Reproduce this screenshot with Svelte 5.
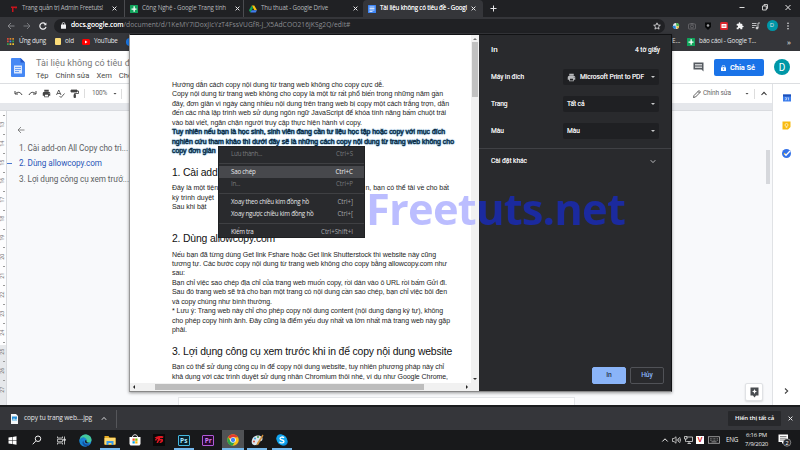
<script>
  // Spreads the letters of a line so that it fills the given width.
  function fit(node, width) {
    node.style.letterSpacing = '0px';
    const range = document.createRange();
    range.selectNodeContents(node);
    const natural = range.getBoundingClientRect().width;
    const count = [...node.textContent.normalize('NFC')].length;
    node.style.letterSpacing = `${(width - natural) / count}px`;
    node.style.width = `${width}px`;
  }

  const tabs = [
    { icon: 'red', text: 'Trang quản trị Admin Freetuts!', w: 81 },
    { icon: 'sheet', text: 'Công Nghệ - Google Trang tính', w: 84 },
    { icon: 'drive', text: 'Thu thuat - Google Drive', w: 67 },
    { icon: 'doc', text: 'Tài liệu không có tiêu đề - Googl', w: 87, active: true }
  ];

  const intro = [
    ['Hướng dẫn cách copy nội dung từ trang web không cho copy cực dễ.', 212],
    ['Copy nội dung từ trang web không cho copy là một từ rất phổ biến trong những năm gần', 271],
    ['đây, đơn giản vì ngày càng nhiều nội dung trên trang web bị copy một cách trắng trợn, dẫn', 277],
    ['đến các nhà lập trình web sử dụng ngôn ngữ JavaScript để khóa tính năng bấm chuột trái', 274],
    ['vào bài viết, ngăn chặn người truy cập thực hiện hành vi copy.', 190]
  ];
  const marked = [
    ['Tuy nhiên nếu bạn là học sinh, sinh viên đang cần tư liệu học tập hoặc copy với mục đích', 273],
    ['nghiên cứu tham khảo thì dưới đây sẽ là những cách copy nội dung từ trang web không cho', 282],
    ['copy đơn giản', 43.5]
  ];
  const second = [
    ['Nếu bạn đã từng dùng Get link Fshare hoặc Get link Shutterstock thì website này cũng', 264],
    ['tương tự. Các bước copy nội dung từ trang web không cho copy bằng allowcopy.com như', 275],
    ['sau:', 13],
    ['Bạn chỉ việc sao chép địa chỉ của trang web muốn copy, rồi dán vào ô URL rồi bấm Gửi đi.', 275],
    ['Sau đó trang web sẽ trả cho bạn một trang có nội dung cần sao chép, bạn chỉ việc bôi đen', 275],
    ['và copy chúng như bình thường.', 100],
    ['* Lưu ý: Trang web này chỉ cho phép copy nội dung content (nội dung dạng ký tự), không', 271],
    ['cho phép copy hình ảnh. Đây cũng là điểm yếu duy nhất và lớn nhất mà trang web này gặp', 278],
    ['phải.', 15]
  ];
  const third = [
    ['Bạn có thể sử dụng công cụ in để copy nội dung website, tuy nhiên phương pháp này chỉ', 272],
    ['khả dụng với các trình duyệt sử dụng nhân Chromium thôi nhé, ví dụ như Google Chrome,', 276]
  ];
  const menu = [
    { t: 'Lưu thành...', w: 31, k: 'Ctrl+S', kw: 17, off: true },
    null,
    { t: 'Sao chép', w: 24.5, k: 'Ctrl+C', kw: 17.5, hot: true },
    { t: 'In...', w: 9, k: 'Ctrl+P', kw: 17, off: true },
    null,
    { t: 'Xoay theo chiều kim đồng hồ', w: 78, k: 'Ctrl+]', kw: 15.5 },
    { t: 'Xoay ngược chiều kim đồng hồ', w: 82.5, k: 'Ctrl+[', kw: 15.5 },
    null,
    { t: 'Kiểm tra', w: 22.5, k: 'Ctrl+Shift+I', kw: 32 }
  ];
  const fields = [
    { label: 'Máy in đích', lw: 33, value: 'Microsoft Print to PDF', vw: 64, printer: true },
    { label: 'Trang', lw: 16.5, value: 'Tất cả', vw: 17.5 },
    { label: 'Màu', lw: 13, value: 'Màu', vw: 13 }
  ];
  const ruler = [13, 14, 15, 16, 17, 18, 19, 20, 21, 22, 23, 24, 25, 26, 27];
  const apps = ['win', 'search', 'task', 'edge', 'folder', 'store', 'garena', 'ps', 'pr', 'chrome', 'paint', 'skype'];
  const running = ['folder', 'ps', 'chrome', 'paint', 'skype'];
</script>

{#snippet line(t, w)}<div class="ln"><span class="fit" use:fit={w}>{t}</span></div>{/snippet}

{#snippet printer(color)}
  <svg width="9" height="9" viewBox="0 0 24 24" fill={color}><path d="M6 2h12v5H6zM5 8h14a3 3 0 0 1 3 3v7h-4v4H6v-4H2v-7a3 3 0 0 1 3-3zm3 7v5h8v-5zm11-5a1.2 1.2 0 1 0 0 2.4A1.2 1.2 0 0 0 19 10z" fill-rule="evenodd"/></svg>
{/snippet}

{#snippet cross()}
  <svg width="5" height="5" viewBox="0 0 5 5" stroke="#e8e8ea" stroke-width="1"><path d="M.6.6l3.8 3.8M4.4.6L.6 4.4"/></svg>
{/snippet}

{#snippet favicon(name)}
  <svg class="fav" width="8" height="8" viewBox="0 0 16 16">
    {#if name === 'red'}
      <path d="M2 3h12v3H7v8H4V6H2z" fill="#c8141c"/><path d="M9 6h5l-2 3z" fill="#7d1116"/>
    {:else if name === 'sheet'}
      <rect width="16" height="16" rx="1" fill="#12a45c"/><path d="M7 2.5h2.6V7H13v2.5H9.6v4H7v-4H3V7h4z" fill="#fff"/>
    {:else if name === 'drive'}
      <path d="M5.4 1h5.2L16 10.5h-5.2z" fill="#fbc20a"/><path d="M5.4 1L8 5.8 2.7 15 0 10.5z" fill="#12a45c"/><path d="M5.4 10.5H16L13.4 15H2.7z" fill="#3f7df0"/>
    {:else}
      <rect width="16" height="16" rx="1" fill="#3f86f5"/><path d="M3 4h10M3 7h10M3 10h10M3 13h6" stroke="#fff" stroke-width="1.5"/>
    {/if}
  </svg>
{/snippet}

{#snippet appIcon(name)}
  {#if name === 'win'}
    <svg width="9" height="9" viewBox="0 0 18 18" fill="#fff"><path d="M1 3l7-1v6.5H1zM9 1.8L17 .6v7.9H9zM1 9.500h7V16l-7-1zM9 9.500h8v7.900L9 16.200z"/></svg>
  {:else if name === 'search'}
    <svg width="10" height="10" viewBox="0 0 20 20" fill="none" stroke="#eee" stroke-width="2"><circle cx="12" cy="7.500" r="5.500"/><path d="M8 11.500L1.500 18.500"/></svg>
  {:else if name === 'task'}
    <svg width="9" height="9" viewBox="0 0 18 18" fill="none" stroke="#ddd" stroke-width="1.600"><path d="M1 1v3h10V1M1 17v-3h10v3M1 6.500h10v5H1zM15 1v16"/><path d="M13.500 6h3v3h-3z" fill="#ddd"/></svg>
  {:else if name === 'edge'}
    <svg width="13" height="13" viewBox="0 0 26 26"><circle cx="13" cy="13" r="12" fill="#1b83d8"/><path d="M1.200 11C3 4 8 1 13 1c7 0 12 5 12 10.500 0 4-3 6-6.500 6-2.500 0-4-1-3.500-2.500 2-4-1-7-5-7-4.500 0-7.500 2-8.800 3z" fill="#45c99b"/><path d="M1.200 11C3 8 8 5 12 7c-4 1-6 5-5 9 1 5 5 7.500 9 8.500C7 27-.8 20 1.200 11z" fill="#1683cf"/><path d="M9 13c-1 6 5 10 13 7-3 5-9 6-13 2-3-3-2.500-7 0-9z" fill="#134c9f"/><path d="M15 15c.5 2 3 3 6 2-3 3-9 2-9-2 0-2 1.500-3 2-3 1 1 1.200 2 1 3z" fill="#1a1b1d"/></svg>
  {:else if name === 'folder'}
    <svg width="12" height="11" viewBox="0 0 24 22"><path d="M1 2h8l2 3h12v15H1z" fill="#e8ad25"/><path d="M1 6h22v12H1z" fill="#ffda70"/><path d="M5 12h14v8h-4v-4H9v4H5z" fill="#3b9be8"/></svg>
  {:else if name === 'store'}
    <svg width="12" height="12" viewBox="0 0 24 24"><path d="M7 6c0-6 10-6 10 0" fill="none" stroke="#eee" stroke-width="2"/><path d="M1 6h22v14l-2 3H3l-2-3z" fill="#fff"/><path d="M7 9h4.500v4.500H7z" fill="#f04e26"/><path d="M12.500 9H17v4.500h-4.500z" fill="#7fb800"/><path d="M7 14.500h4.500V19H7z" fill="#00a0e8"/><path d="M12.500 14.500H17V19h-4.500z" fill="#fdb800"/></svg>
  {:else if name === 'garena'}
    <svg width="12" height="12" viewBox="0 0 24 24"><rect width="24" height="24" fill="#090909"/><path d="M3 8c4-4 12-5 18-3l-1 3h-6v2c5-1 7 1 6 4s-4 4-7 4l1-3c3 0 3-2 2-2s-3 0-4 1l-2 4H7l3-8C8 10 7 11 7 13H4c0-2 1-4 3-5z" fill="#e01621"/></svg>
  {:else if name === 'ps' || name === 'pr'}
    <span class="adobe {name}">{name === 'ps' ? 'Ps' : 'Pr'}</span>
  {:else if name === 'chrome'}
    <svg width="12" height="12" viewBox="0 0 24 24"><circle cx="12" cy="12" r="11.500" fill="#fbc116"/><path d="M12 12L2 6.300A11.500 11.500 0 0 1 22 6.300H12z" fill="#e33b2e"/><path d="M2 6.300A11.500 11.500 0 0 0 11 23.500l5.500-9L12 12 7 14.500z" fill="#2ba24c"/><circle cx="12" cy="12" r="5.600" fill="#fff"/><circle cx="12" cy="12" r="4.300" fill="#4285f4"/></svg>
  {:else if name === 'paint'}
    <svg width="13" height="12" viewBox="0 0 26 24"><path d="M3 9C7 2 18 1 22 6c3 5-1 9-5 9-3 0-2 3-5 6-3 2-8 2-10-2-1-3-1-6 1-10z" fill="#dce6ee"/><circle cx="8" cy="9" r="2" fill="#36a0dc"/><circle cx="14" cy="6" r="2" fill="#4a9d4b"/><circle cx="6" cy="15" r="2" fill="#d1483a"/><path d="M23 1l2 2L15 21l-4 2 1-5z" fill="#d1913f"/></svg>
  {:else}
    <svg width="12" height="12" viewBox="0 0 24 24"><circle cx="9" cy="9" r="8.500" fill="#12a5f4"/><circle cx="15" cy="15" r="8.500" fill="#098ce0"/><circle cx="12" cy="12" r="10" fill="#10a5ee"/><path d="M16 8c-2-3-8-2.500-8 1 0 4 8 2 8 6 0 3.500-7 4-9 .500" fill="none" stroke="#fff" stroke-width="2.600"/></svg>
  {/if}
{/snippet}

<div class="screen">
  <div class="tabs">
    {#each tabs as tab}
      <div class="tab {tab.icon}" class:active={tab.active}>
        {@render favicon(tab.icon)}
        <span class="fit" use:fit={tab.w}>{tab.text}</span>
        {@render cross()}
      </div>
    {/each}
    <svg class="plus" width="7" height="7" viewBox="0 0 7 7" stroke="#e8e8ea"><path d="M3.500.500v6M.500 3.500h6"/></svg>
    <div class="winctl">
      <svg width="6" height="7" viewBox="0 0 6 7" stroke="#ddd"><path d="M.500 3.500h5"/></svg>
      <svg width="6" height="7" viewBox="0 0 6 7" fill="none" stroke="#ddd" stroke-width=".9"><path d="M.500 2h3.800v4H.500zM2 2V.600h3.500v3.900H4.300"/></svg>
      <svg width="6" height="7" viewBox="0 0 6 7" stroke="#e8e8e8"><path d="M.500 1l5 5M5.500 1l-5 5"/></svg>
    </div>
  </div>

  <div class="nav">
    <div class="navbtns">
      <svg width="8" height="8" viewBox="0 0 8 8" fill="none" stroke="#85868a" stroke-width="1"><path d="M7.500 4H1M4 1L1 4l3 3"/></svg>
      <svg width="8" height="8" viewBox="0 0 8 8" fill="none" stroke="#77787c" stroke-width="1"><path d="M.500 4H7M4 1l3 3-3 3"/></svg>
      <svg width="8" height="8" viewBox="0 0 8 8" fill="none" stroke="#f1f1f3" stroke-width="1.200"><path d="M7 4.800A3.100 3.100 0 1 1 6.300 2"/><path d="M4.700 3.200h2.700V.5z" fill="#f1f1f3" stroke="none"/></svg>
    </div>
    <div class="omni">
      <svg width="5" height="7" viewBox="0 0 10 14"><rect y="5" width="10" height="8.500" rx="1" fill="#f1f1f3"/><path d="M2.500 6V3.500a2.500 2.500 0 0 1 5 0V6" fill="none" stroke="#f1f1f3" stroke-width="1.500"/></svg>
      <span class="fit host" use:fit={52.5}>docs.google.com</span><span class="fit path" use:fit={227}>/document/d/1KeMY7iDoxJIcYzT4FssVUGfR-J_X5AdCOO216jKSg2Q/edit#</span>
      <svg class="star" width="8" height="8" viewBox="0 0 24 24" fill="none" stroke="#e8e8ea" stroke-width="2.400"><path d="M12 2.500l2.800 6.600 7.200.600-5.500 4.700 1.700 7L12 17.700l-6.200 3.700 1.700-7L2 9.700l7.200-.600z"/></svg>
    </div>
    <div class="exts">
      <svg width="8" height="8" viewBox="0 0 16 16"><circle cx="8" cy="8" r="6" fill="#e8e9ec"/><path d="M8 2a6 6 0 0 1 7 5L9 9z" fill="#49b551"/><path d="M1 8l6-1 1 7C4 14 1 12 1 8z" fill="#2786d9"/><path d="M8 10l6-2-2 6z" fill="#f0bd24"/></svg>
      <svg width="8" height="8" viewBox="0 0 16 16" fill="none" stroke="#6d6e72" stroke-width="1.500"><rect x="1" y="4" width="14" height="10" rx="1"/><circle cx="8" cy="9" r="3"/><path d="M5 3h6"/></svg>
      <svg width="8" height="8" viewBox="0 0 16 16"><path d="M2 1h12v9l-6 6-6-6z" fill="#08090a"/><circle cx="8" cy="7" r="2.600" fill="#a0a1a4"/></svg>
      <svg width="8" height="8" viewBox="0 0 16 16"><rect width="16" height="16" rx="3" fill="#d9252c"/><path d="M3 4h10v8H3z" fill="#fff"/><path d="M4.500 8L7 6v4zm7 0L9 6v4z" fill="#d9252c"/></svg>
      <svg width="8" height="8" viewBox="0 0 24 24" fill="#f3f3f4"><path d="M20.500 11H19V7a2 2 0 0 0-2-2h-4V3.500a2.500 2.500 0 0 0-5 0V5H4a2 2 0 0 0-2 2v3.800h1.500a2.700 2.700 0 0 1 0 5.400H2V20a2 2 0 0 0 2 2h3.800v-1.500a2.700 2.700 0 0 1 5.400 0V22H17a2 2 0 0 0 2-2v-4h1.500a2.500 2.500 0 0 0 0-5z"/></svg>
      <svg width="8" height="8" viewBox="0 0 16 16" fill="none" stroke="#d6d7d9" stroke-width="1.700"><path d="M0 3h9M0 7h9M0 11h5M12 12V2h4"/><circle cx="10" cy="12" r="2" fill="#d6d7d9"/></svg>
      <span class="me">D</span>
      <svg width="8" height="8" viewBox="0 0 8 8" fill="#e8e8ea"><circle cx="4" cy="1.200" r=".8"/><circle cx="4" cy="4" r=".8"/><circle cx="4" cy="6.800" r=".8"/></svg>
    </div>
  </div>

  <div class="marks">
    <svg width="7" height="7" viewBox="0 0 7 7"><path d="M0 0h1.700v1.700H0zM0 2.600h1.700v1.700H0z" fill="#d84b3d"/><path d="M2.600 0h1.700v1.700H2.600zM5.300 0H7v1.700H5.300z" fill="#d5892f"/><path d="M2.600 2.600h1.700v1.700H2.600z" fill="#4285f4"/><path d="M5.300 2.600H7v1.700H5.300zM0 5.300h1.700V7H0z" fill="#2fa556"/><path d="M2.600 5.300h1.700V7H2.600zM5.300 5.300H7V7H5.300z" fill="#eebd32"/></svg>
    <span class="fit m1" use:fit={27}>Ứng dụng</span>
    <i class="yellow"></i>
    <span class="fit m2" use:fit={9}>old</span>
    <svg class="yt" width="8" height="6" viewBox="0 0 16 12"><rect width="16" height="12" rx="3" fill="#f00"/><path d="M6 3l5 3-5 3z" fill="#fff"/></svg>
    <span class="fit m2" use:fit={23.5}>YouTube</span>
    <i class="fb"></i>
    <div class="marksright">
      <span>E...</span>{@render favicon('sheet')}<span class="fit" use:fit={57}>báo cáoi - Google T...</span><span class="more">»</span>
    </div>
  </div>

  <main class="docs">
    <header class="dochead">
      <svg class="logo" width="14" height="19" viewBox="0 0 28 38"><path d="M2 0h17l9 9v27a2 2 0 0 1-2 2H2a2 2 0 0 1-2-2V2a2 2 0 0 1 2-2z" fill="#4688f4"/><path d="M19 0l9 9h-9z" fill="#2456c7"/><rect x="6" y="15" width="16" height="16" fill="#dce8fd"/><path d="M8 19h12M8 23h12M8 27h8" stroke="#4688f4" stroke-width="1.500"/></svg>
      <div class="titles">
        <div class="title"><span class="fit" use:fit={99}>Tài liệu không có tiêu đề</span></div>
        <div class="menus"><span>Tệp</span><span>Chỉnh sửa</span><span>Xem</span><span>Chèn</span></div>
      </div>
      <svg class="comment" width="11" height="10" viewBox="0 0 22 20"><path d="M1 1h20v18l-4-4H1z" fill="#555a60"/><path d="M4 5h14M4 8h14M4 11h14" stroke="#fff" stroke-width="1.400"/></svg>
      <div class="share"><svg width="5" height="6" viewBox="0 0 10 12"><rect y="4.500" width="10" height="7.500" rx="1" fill="#fff"/><path d="M2.500 5V3a2.500 2.500 0 0 1 5 0v2" fill="none" stroke="#fff" stroke-width="1.400"/><circle cx="5" cy="8" r="1.300" fill="#1a73e8"/></svg><span class="fit" use:fit={25}>Chia Sẻ</span></div>
      <span class="avatar">D</span>
    </header>

    <div class="work">
      <div class="workmain">
        <div class="toolbar">
          <div class="tools">
            <svg width="9" height="9" viewBox="0 0 18 18" fill="none" stroke="#444" stroke-width="2"><path d="M3 9c5-4 10-3 13 3M2 4v6h6"/></svg>
            <svg width="9" height="9" viewBox="0 0 18 18" fill="none" stroke="#444" stroke-width="2"><path d="M15 9C10 5 5 6 2 12M16 4v6h-6"/></svg>
            {@render printer('#444')}
            <svg width="9" height="9" viewBox="0 0 18 18" fill="none" stroke="#444" stroke-width="1.700"><path d="M1 12L5.500 2 10 12M2.500 9h6M7 14l3 3 7-8"/></svg>
            <svg width="9" height="9" viewBox="0 0 18 18" fill="none" stroke="#444" stroke-width="1.700"><path d="M2 2h12v4H2z" fill="#444"/><path d="M14 4h3v5H9v3"/><path d="M8 11h3v6H8z" fill="#444"/></svg>
          </div>
          <span class="fit zoomv" use:fit={15}>100%</span>
          <i class="caret dark"></i>
          <i class="split"></i>
          <div class="mode">
            <svg width="8" height="8" viewBox="0 0 16 16" fill="none" stroke="#444" stroke-width="1.700"><path d="M1 15l1-4L12 1l3 3L5 14zM10 3l3 3"/></svg>
            <span class="fit" use:fit={28}>Chỉnh sửa</span>
            <i class="caret dark"></i>
            <b></b>
            <svg width="6" height="5" viewBox="0 0 6 5" fill="none" stroke="#333" stroke-width="1.100"><path d="M.500 4L3 1.300 5.500 4"/></svg>
          </div>
        </div>
        <div class="hruler"></div>
        <div class="canvas">
          <div class="vruler">
            {#each ruler as n}<div class="num"><span>{n}</span></div>{/each}
          </div>
          <div class="outline">
            <svg width="8" height="8" viewBox="0 0 16 16" fill="none" stroke="#666" stroke-width="1.500"><path d="M15 8H2M8 2L2 8l6 6"/></svg>
            <div class="item"><span class="fit" use:fit={109}>1. Cài add-on All Copy cho trì...</span></div>
            <div class="item on"><span class="fit" use:fit={83}>2. Dùng allowcopy.com</span></div>
            <div class="item"><span class="fit" use:fit={110}>3. Lợi dụng công cụ xem trướ...</span></div>
          </div>
          <div class="sheetpage"></div>
          <div class="edgecol">
            <div class="thumb"></div>
            <div class="explore"><svg width="9" height="11" viewBox="0 0 18 22"><path d="M1 1h16v16h-5l-3 4-3-4H1z" fill="#4a4d51"/><path d="M9 4l1.500 3.500L14 9l-3.500 1.500L9 14l-1.500-3.500L4 9l3.500-1.500z" fill="#fff"/></svg></div>
          </div>
        </div>
      </div>
      <aside class="side">
        <svg width="8" height="8" viewBox="0 0 16 16"><path d="M0 1h16v14H0z" fill="#3a7cec"/><path d="M0 1h16v4H0z" fill="#1e50b8"/><path d="M4 7.500h3v4H4m5-4h2v5" fill="none" stroke="#dfe9fc" stroke-width="1.300"/></svg>
        <svg width="9" height="9" viewBox="0 0 18 18"><path d="M1 1h16v11l-5 5H1z" fill="#f8bb12"/><circle cx="9" cy="8" r="3" fill="none" stroke="#fff3c9" stroke-width="1.500"/><path d="M7.500 12.500h3" stroke="#fff" stroke-width="1.500"/></svg>
        <svg width="9" height="9" viewBox="0 0 18 18"><circle cx="9" cy="9" r="9" fill="#3573e8"/><path d="M4.500 9l3.500 3.500L16 4" fill="none" stroke="#fff" stroke-width="2.500"/><circle cx="5" cy="9.500" r="1.500" fill="#f7c331"/></svg>
        <svg class="open" width="5" height="6" viewBox="0 0 5 6" fill="none" stroke="#444" stroke-width="1.100"><path d="M1 .500L3.700 3 1 5.500"/></svg>
      </aside>
    </div>
  </main>

  <div class="downloads">
    <svg width="7" height="10" viewBox="0 0 14 20"><path d="M0 0h10l4 4v16H0z" fill="#f5f7f9"/><rect x="2" y="5" width="10" height="9" fill="#278fd9"/><path d="M2 12l4-4 3 3 3-2v5H2z" fill="#9fd3ee"/></svg>
    <span class="fit file" use:fit={68}>copy tu trang web....jpg</span>
    <svg width="6" height="5" viewBox="0 0 6 5" fill="none" stroke="#d5d6d8"><path d="M.800 3.800L3 1.400l2.200 2.400"/></svg>
    <b></b>
    <div class="showall"><span class="fit" use:fit={39}>Hiển thị tất cả</span></div>
    {@render cross()}
  </div>

  <div class="taskbar">
    {#each apps as a}
      <div class="app" class:run={running.includes(a)} class:cur={a === 'chrome'}>{@render appIcon(a)}</div>
    {/each}
    <div class="tray">
      <svg width="8" height="8" viewBox="0 0 8 8" fill="none" stroke="#eee"><path d="M1.300 5.500L4 2.800l2.700 2.700"/></svg>
      <svg width="9" height="8" viewBox="0 0 18 16" fill="none" stroke="#ddd" stroke-width="1.500"><path d="M1 5h3l4-3.500v13L4 11H1zM10 6q1.500 2 0 4M12.500 4q3 4 0 8M15 2q4.500 6 0 12"/></svg>
      <svg width="9" height="8" viewBox="0 0 18 16" fill="none" stroke="#ddd" stroke-width="1.600"><path d="M5 2h12v9H5M10 11v4M7 15h7M1 1v5h5V1zM3 6v5h2"/></svg>
      <span class="vkey">V</span>
      <svg class="kb" width="12" height="8" viewBox="0 0 24 16" fill="none" stroke="#bbb" stroke-width="1.500"><rect x="1" y="1.500" width="22" height="13"/><path d="M4 5.500h16M4 8.500h16" stroke-dasharray="1.500 1.300"/><path d="M7 11.700h10"/></svg>
      <span class="fit" use:fit={12}>ENG</span>
      <div class="clock"><span class="fit" use:fit={21}>6:16 PM</span><span class="fit" use:fit={23}>7/9/2020</span></div>
      <svg class="note" width="14" height="13" viewBox="0 0 28 26"><path d="M1 1h19v15h-8l-4 4v-4H1z" fill="#fff"/><path d="M4 5h13M4 8.500h13M4 12h8" stroke="#444" stroke-width="1.300"/><circle cx="18" cy="17" r="7.500" fill="#252629" stroke="#ddd" stroke-width="1"/><text x="15.200" y="21" font-family="Liberation Sans" font-size="11" fill="#fff">2</text></svg>
    </div>
  </div>

  <section class="dialog">
    <div class="preview">
      <div class="pagewrap">
        <article class="page">
          {#each intro as [t, w]}{@render line(t, w)}{/each}
          <div class="sel">{#each marked as [t, w]}{@render line(t, w)}{/each}</div>
          <h2><span class="fit" use:fit={45.5}>1. Cài add</span></h2>
          <div class="ln broken"><span class="fit" use:fit={46}>Đây là một tiện</span><span class="fit" use:fit={83.5}>n, bạn có thể tải về cho bất</span></div>
          {@render line('kỳ trình duyệt', 42)}
          {@render line('Sau khi bật', 34.5)}
          <h2 class="far"><span class="fit" use:fit={103}>2. Dùng allowcopy.com</span></h2>
          {#each second as [t, w]}{@render line(t, w)}{/each}
          <h2><span class="fit" use:fit={280}>3. Lợi dụng công cụ xem trước khi in để copy nội dung website</span></h2>
          {#each third as [t, w]}{@render line(t, w)}{/each}
        </article>
        <div class="vbar"><i class="up"></i><div></div><i class="down"></i></div>
      </div>
      <div class="hbar"><i class="lf"></i><div></div><i class="rt"></i></div>
    </div>
    <div class="settings">
      <div class="sethead"><span class="in">In</span><span class="fit" use:fit={25}>4 tờ giấy</span></div>
      {#each fields as f}
        <div class="field">
          <span class="fit" use:fit={f.lw}>{f.label}</span>
          <div class="select">
            {#if f.printer}{@render printer('#b9babd')}{/if}
            <span class="fit" use:fit={f.vw}>{f.value}</span><i class="caret"></i>
          </div>
        </div>
      {/each}
      <div class="others"><span class="fit" use:fit={36}>Cài đặt khác</span><svg width="6" height="5" viewBox="0 0 6 5" fill="none" stroke="#b9babd"><path d="M.700 1.200L3 3.600l2.300-2.400"/></svg></div>
      <div class="buttons"><span class="ok">In</span><span>Hủy</span></div>
    </div>
  </section>

  <div class="mark"><span class="fit" use:fit={259}>Freetuts.net</span></div>

  <div class="ctx">
    {#each menu as m}
      {#if m}
        <div class="row" class:off={m.off} class:hot={m.hot}><span class="fit" use:fit={m.w}>{m.t}</span><span class="fit key" use:fit={m.kw}>{m.k}</span></div>
      {:else}<hr />{/if}
    {/each}
  </div>
</div>

<style>
  :global(body) { margin: 0; }
  .screen { position: relative; width: 800px; height: 450px; overflow: hidden; display: flex; flex-direction: column; background: #202124; font-family: "Open Sans", "Noto Sans", sans-serif; font-size: 6.500px; line-height: 1; color: #e4e5e7; }
  .screen * { box-sizing: border-box; }
  svg { display: block; flex: none; }
  .fit { display: inline-block; white-space: nowrap; flex: none; }
  i { display: block; flex: none; }

  .tabs { height: 17px; flex: none; display: flex; align-items: center; background: #202124; }
  .tab { display: flex; align-items: center; height: 17px; width: 119px; padding-left: 4px; color: #b5b7ba; border-right: 0 solid #4a4b4f; font-size: 6.200px; }
  .tab.red { width: 125px; padding-left: 10px; border-right-width: 1px; background-clip: content-box; }
  .tab.sheet { padding-left: 5px; border-right-width: 1px; background-clip: content-box; }
  .tab.drive { padding-left: 5px; }
  .tab.drive .fit { margin-right: 25px; }
  .tab .fit { margin: 0 9px 0 4px; }
  .tab.active { background: #35363a; color: #edeef0; height: 17px; border-radius: 4px 4px 0 0; padding-left: 5px; width: 120px; }
  .tab.active .fit { margin-right: 4px; text-shadow: 0 0 0.300px #fff; }
  .plus { margin-left: 7px; }
  .winctl { margin: -3px 9px 0 auto; display: flex; gap: 17px; }

  .nav { height: 17px; flex: none; background: #35363a; display: flex; align-items: center; }
  .navbtns { width: 54px; padding-left: 7px; display: flex; gap: 8px; }
  .omni { width: 611px; height: 14px; border-radius: 7px; background: #202124; display: flex; align-items: center; padding: 0 4px 0 7px; font-size: 6.700px; }
  .host { margin-left: 5px; color: #f5f5f6; text-shadow: 0 0 0.300px #fff; }
  .path { color: #8b8d91; }
  .star { margin-left: auto; }
  .exts { display: flex; align-items: center; gap: 8px; margin-left: 7px; }
  .exts .me { width: 11px; height: 11px; border-radius: 50%; background: #0097a7; margin: 0 -1.500px; text-align: center; line-height: 11px; font-size: 6px; }

  .marks { height: 17px; flex: none; background: #35363a; display: flex; align-items: center; padding: 0 0 2px 7px; font-size: 6.300px; }
  .m1 { margin: 0 9px 0 5px; }
  .m2 { margin: 0 8px 0 4px; }
  .yellow { width: 6px; height: 7px; background: #fbdc79; border-radius: 1px; }
  .marks .m2 + .fb { width: 8px; height: 8px; border-radius: 50%; background: #1877e8; }
  .marksright { margin-left: auto; width: 128px; display: flex; align-items: center; }
  .marksright > span:first-child { width: 15px; }
  .marksright .fit { margin-left: 4px; }
  .more { margin-left: auto; margin-right: 9px; font-size: 8px; line-height: 5px; }

  .docs { height: 354px; flex: none; background: #f8f9fb; display: flex; flex-direction: column; font-family: Roboto, sans-serif; color: #444; }
  .dochead { height: 33px; flex: none; background: #fff; border-bottom: 1px solid #dcdee1; display: flex; padding-left: 11px; }
  .logo { margin-top: 7px; }
  .titles { margin-left: 11px; display: flex; flex-direction: column; width: 651px; }
  .title { font-size: 9px; color: #777; margin-top: 7px; height: 13px; line-height: 10px; }
  .menus { display: flex; gap: 7px; font-size: 7.600px; line-height: 9px; color: #4a4a4a; }
  .comment { margin: 11px 10px 0 6px; }
  .share { margin-top: 8px; width: 50px; height: 17px; border-radius: 2px; background: #1a73e8; display: flex; align-items: center; padding-left: 7px; gap: 4px; color: #fff; font-weight: 700; font-size: 7.500px; }
  .avatar { margin: 8px 0 0 10px; width: 16px; height: 16px; border-radius: 50%; background: #0097a7; color: #fff; text-align: center; line-height: 17px; font-size: 10px; }
  .work { flex: 1; display: flex; }
  .workmain { width: 772px; display: flex; flex-direction: column; }
  .toolbar { height: 19px; flex: none; background: #fff; display: flex; align-items: center; padding-left: 14px; color: #666; }
  .tools { display: flex; gap: 5px; padding-right: 5px; border-right: 1px solid #ddd; margin-right: 7px; }
  .zoomv { margin-right: 6px; }
  .split { width: 1px; height: 10px; background: #ddd; margin-left: 4px; }
  .caret { width: 4px; height: 2px; background: #c7c8ca; clip-path: polygon(0 0, 100% 0, 50% 100%); }
  .caret.dark { width: 4px; height: 2px; background: #444; }
  .mode { margin-left: auto; width: 79px; display: flex; align-items: center; }
  .mode .fit { margin: 0 14px 0 2px; }
  .mode b { width: 1px; height: 10px; background: #ddd; margin: 0 6px 0 5px; }
  .hruler { height: 8px; flex: none; background: #e5e7eb; border-bottom: 1px solid #d9dbdf; }
  .canvas { flex: 1; display: flex; }
  .vruler { width: 7px; border-right: 1px solid #d8dade; background: linear-gradient(#fdfdfe 234px, #e6e8eb 234px); padding-top: 4px; overflow: hidden; }
  .num { height: 18.930px; display: flex; align-items: center; justify-content: center; font-size: 5.500px; color: #777; background: linear-gradient(#999, #999) 3px 0 / 2px 1px no-repeat; }
  .num span { transform: rotate(-90deg); }
  .outline { width: 120px; padding: 15px 0 0 12px; font-size: 8.200px; }
  .outline svg { margin-left: -2px; margin-bottom: 6.500px; }
  .item { height: 15.800px; line-height: 15.800px; white-space: nowrap; color: #5c5f63; }
  .item.on { color: #2a56b8; margin-left: -12px; background: linear-gradient(#4a78cf, #4a78cf) 0 7px / 5px 1px no-repeat; padding-left: 12px; }
  .sheetpage { margin: auto 0 0 51px; width: 397px; height: 8px; background: #fff; border: 1px solid #e4e6e9; border-bottom: 0; }
  .edgecol { margin-left: auto; display: flex; flex-direction: column; align-items: flex-end; }
  .thumb { width: 4px; height: 34px; background: #d6d8dc; margin: 39px 2px 0 0; }
  .explore { width: 18px; height: 18px; margin: auto 9px 4px 0; background: #fff; border: 1px solid #e0e2e5; border-radius: 2px; display: flex; align-items: center; justify-content: center; box-shadow: 0 1px 2px #0002; }
  .side { width: 28px; background: #fff; border-left: 1px solid #e0e2e5; display: flex; flex-direction: column; align-items: center; gap: 19px; padding-top: 10px; }
  .side .open { margin-top: auto; margin-bottom: 11px; }

  .downloads { height: 25px; flex: none; background: #35363a; border-top: 2px solid #1b1c1e; display: flex; align-items: center; padding: 0 7px 0 11px; }
  .file { margin: 0 9px 0 6px; font-size: 6.600px; }
  .downloads b { width: 1px; height: 18px; background: #55565a; margin-left: 9px; }
  .showall { margin: -1px 7px 0 auto; width: 53px; height: 15px; background: #27282b; display: flex; align-items: center; justify-content: center; color: #fff; font-size: 6px; font-weight: 600; border-radius: 1px; }
  .taskbar { height: 20px; flex: none; background: #18191b; display: flex; align-items: center; }
  .app { width: 20px; height: 20px; margin: 0 2.250px; display: flex; align-items: center; justify-content: center; }
  .app.run { border-bottom: 2px solid #76b9ed; padding-top: 2px; }
  .app.cur { background: #505255; width: 22px; margin: 0 1.250px; }
  .adobe { width: 12px; height: 11px; border: 1px solid #45b8de; border-radius: 1px; background: #07212c; color: #a6e8ff; font: 700 6.500px/9px "Open Sans", sans-serif; text-align: center; }
  .adobe.pr { border-color: #b05ad6; background: #28082f; color: #cf7df0; }
  .tray { margin-left: auto; width: 139px; display: flex; align-items: center; font-size: 6.300px; color: #eee; }
  .tray svg + svg { margin-left: 3px; }
  .vkey { width: 8px; height: 8px; background: #fff; color: #d01420; font: 700 7.500px/8px "Liberation Sans", sans-serif; text-align: center; margin-left: 3px; }
  .tray .kb { margin: 0 6px 0 4px; }
  .clock { display: flex; flex-direction: column; align-items: center; gap: 2px; width: 37px; font-size: 6px; }
  .clock .fit { line-height: 7px; }
  .tray .note { margin-left: 3px; }

  .dialog { position: absolute; left: 129px; top: 34px; width: 543px; height: 358px; display: flex; border: 1px solid #111214; border-left-color: #999; border-bottom-color: #888; background: #292a2d; box-shadow: 0 1px 3px #0006; font-family: Roboto, sans-serif; }
  .preview { width: 349px; background: #fff; display: flex; flex-direction: column; }
  .pagewrap { flex: 1; display: flex; min-height: 0; overflow: hidden; }
  .page { flex: 1; padding: 45px 0 0 42px; font: 7px/9.430px "Liberation Sans", Arial, sans-serif; color: #1c1c1c; }
  .ln { height: 9.430px; white-space: nowrap; }
  .ln.broken { display: flex; justify-content: space-between; width: 277px; }
  .sel { color: #0f2b42; text-shadow: 0 0 1px #2f7fb8, 0 0 1.500px #5ba6d8, 0 0 2px #8cc4ea; -webkit-text-stroke: 0.300px #0f2b42; }
  h2 { margin: 9.300px 0 2.600px; height: 16px; font-size: 10.400px; line-height: 16px; font-weight: 400; color: #111; white-space: nowrap; }
  h2.far { margin-top: 19.500px; }
  .vbar { width: 8px; background: #f1f1f1; display: flex; flex-direction: column; align-items: center; padding: 3px 0; }
  .vbar div { width: 6px; height: 55px; margin-top: 2px; background: #c1c1c1; margin-bottom: auto; }
  .up { width: 4px; height: 2px; background: #777; clip-path: polygon(50% 0, 100% 100%, 0 100%); }
  .down { width: 4px; height: 2px; background: #333; clip-path: polygon(0 0, 100% 0, 50% 100%); }
  .hbar { height: 8px; flex: none; background: #f1f1f1; display: flex; align-items: center; padding: 0 11px 0 3px; }
  .hbar div { width: 269px; height: 6px; background: #bdbdbd; margin: 0 auto 0 20px; }
  .lf { width: 2px; height: 4px; background: #222; clip-path: polygon(100% 0, 100% 100%, 0 50%); }
  .rt { width: 2px; height: 4px; background: #222; clip-path: polygon(0 0, 100% 50%, 0 100%); }
  .settings { flex: 1; display: flex; flex-direction: column; background: #292a2d; font-size: 6.700px; color: #e1e2e4; text-shadow: 0 0 0.300px #fff; }
  .sethead { height: 34px; padding: 9px 11px 0 12px; display: flex; justify-content: space-between; line-height: 12px; }
  .in { font-size: 8px; }
  .field { height: 16px; margin-bottom: 11px; padding: 0 12px; display: flex; align-items: center; justify-content: space-between; }
  .select { width: 96px; height: 16px; background: #1f2023; border-radius: 2px; display: flex; align-items: center; padding: 0 4px; gap: 4px; }
  .select .caret { margin-left: auto; }
  .others { border-top: 1px solid #404145; height: 26px; margin-top: -2px; padding: 0 15px 0 12px; display: flex; align-items: center; justify-content: space-between; }
  .buttons { margin: auto 7px 7px auto; display: flex; gap: 4px; text-shadow: none; font-weight: 500; }
  .buttons span { width: 34px; height: 17px; border: 1px solid #505257; border-radius: 2px; color: #8ab4f8; text-align: center; line-height: 15px; }
  .buttons .ok { background: #8ab4f8; border-color: #8ab4f8; color: #27364f; }

  .mark { position: absolute; left: 366px; top: 184px; width: 268px; height: 50px; font: 700 43.500px/50px "Open Sans", sans-serif; color: transparent; background: linear-gradient(90deg, #bbbdff 113px, #1b2a9f 113px); background-clip: text; -webkit-background-clip: text; }

  .ctx { position: absolute; left: 218px; top: 146px; width: 147px; height: 92px; background: #292a2d; border: 1px solid #1f2022; padding-top: 1px; font-size: 6.200px; color: #e7e8ea; }
  .row { height: 12px; display: flex; align-items: center; justify-content: space-between; padding: 0 11px 0 12px; }
  .key { color: #a5a7aa; }
  .row.off, .row.off .key { color: #77797c; }
  .row.hot { background: #47484c; }
  .row.hot .key { color: #f0f0f0; }
  .ctx hr { border: 0; border-top: 1px solid #3f4043; margin: 2.500px 0; }
</style>
